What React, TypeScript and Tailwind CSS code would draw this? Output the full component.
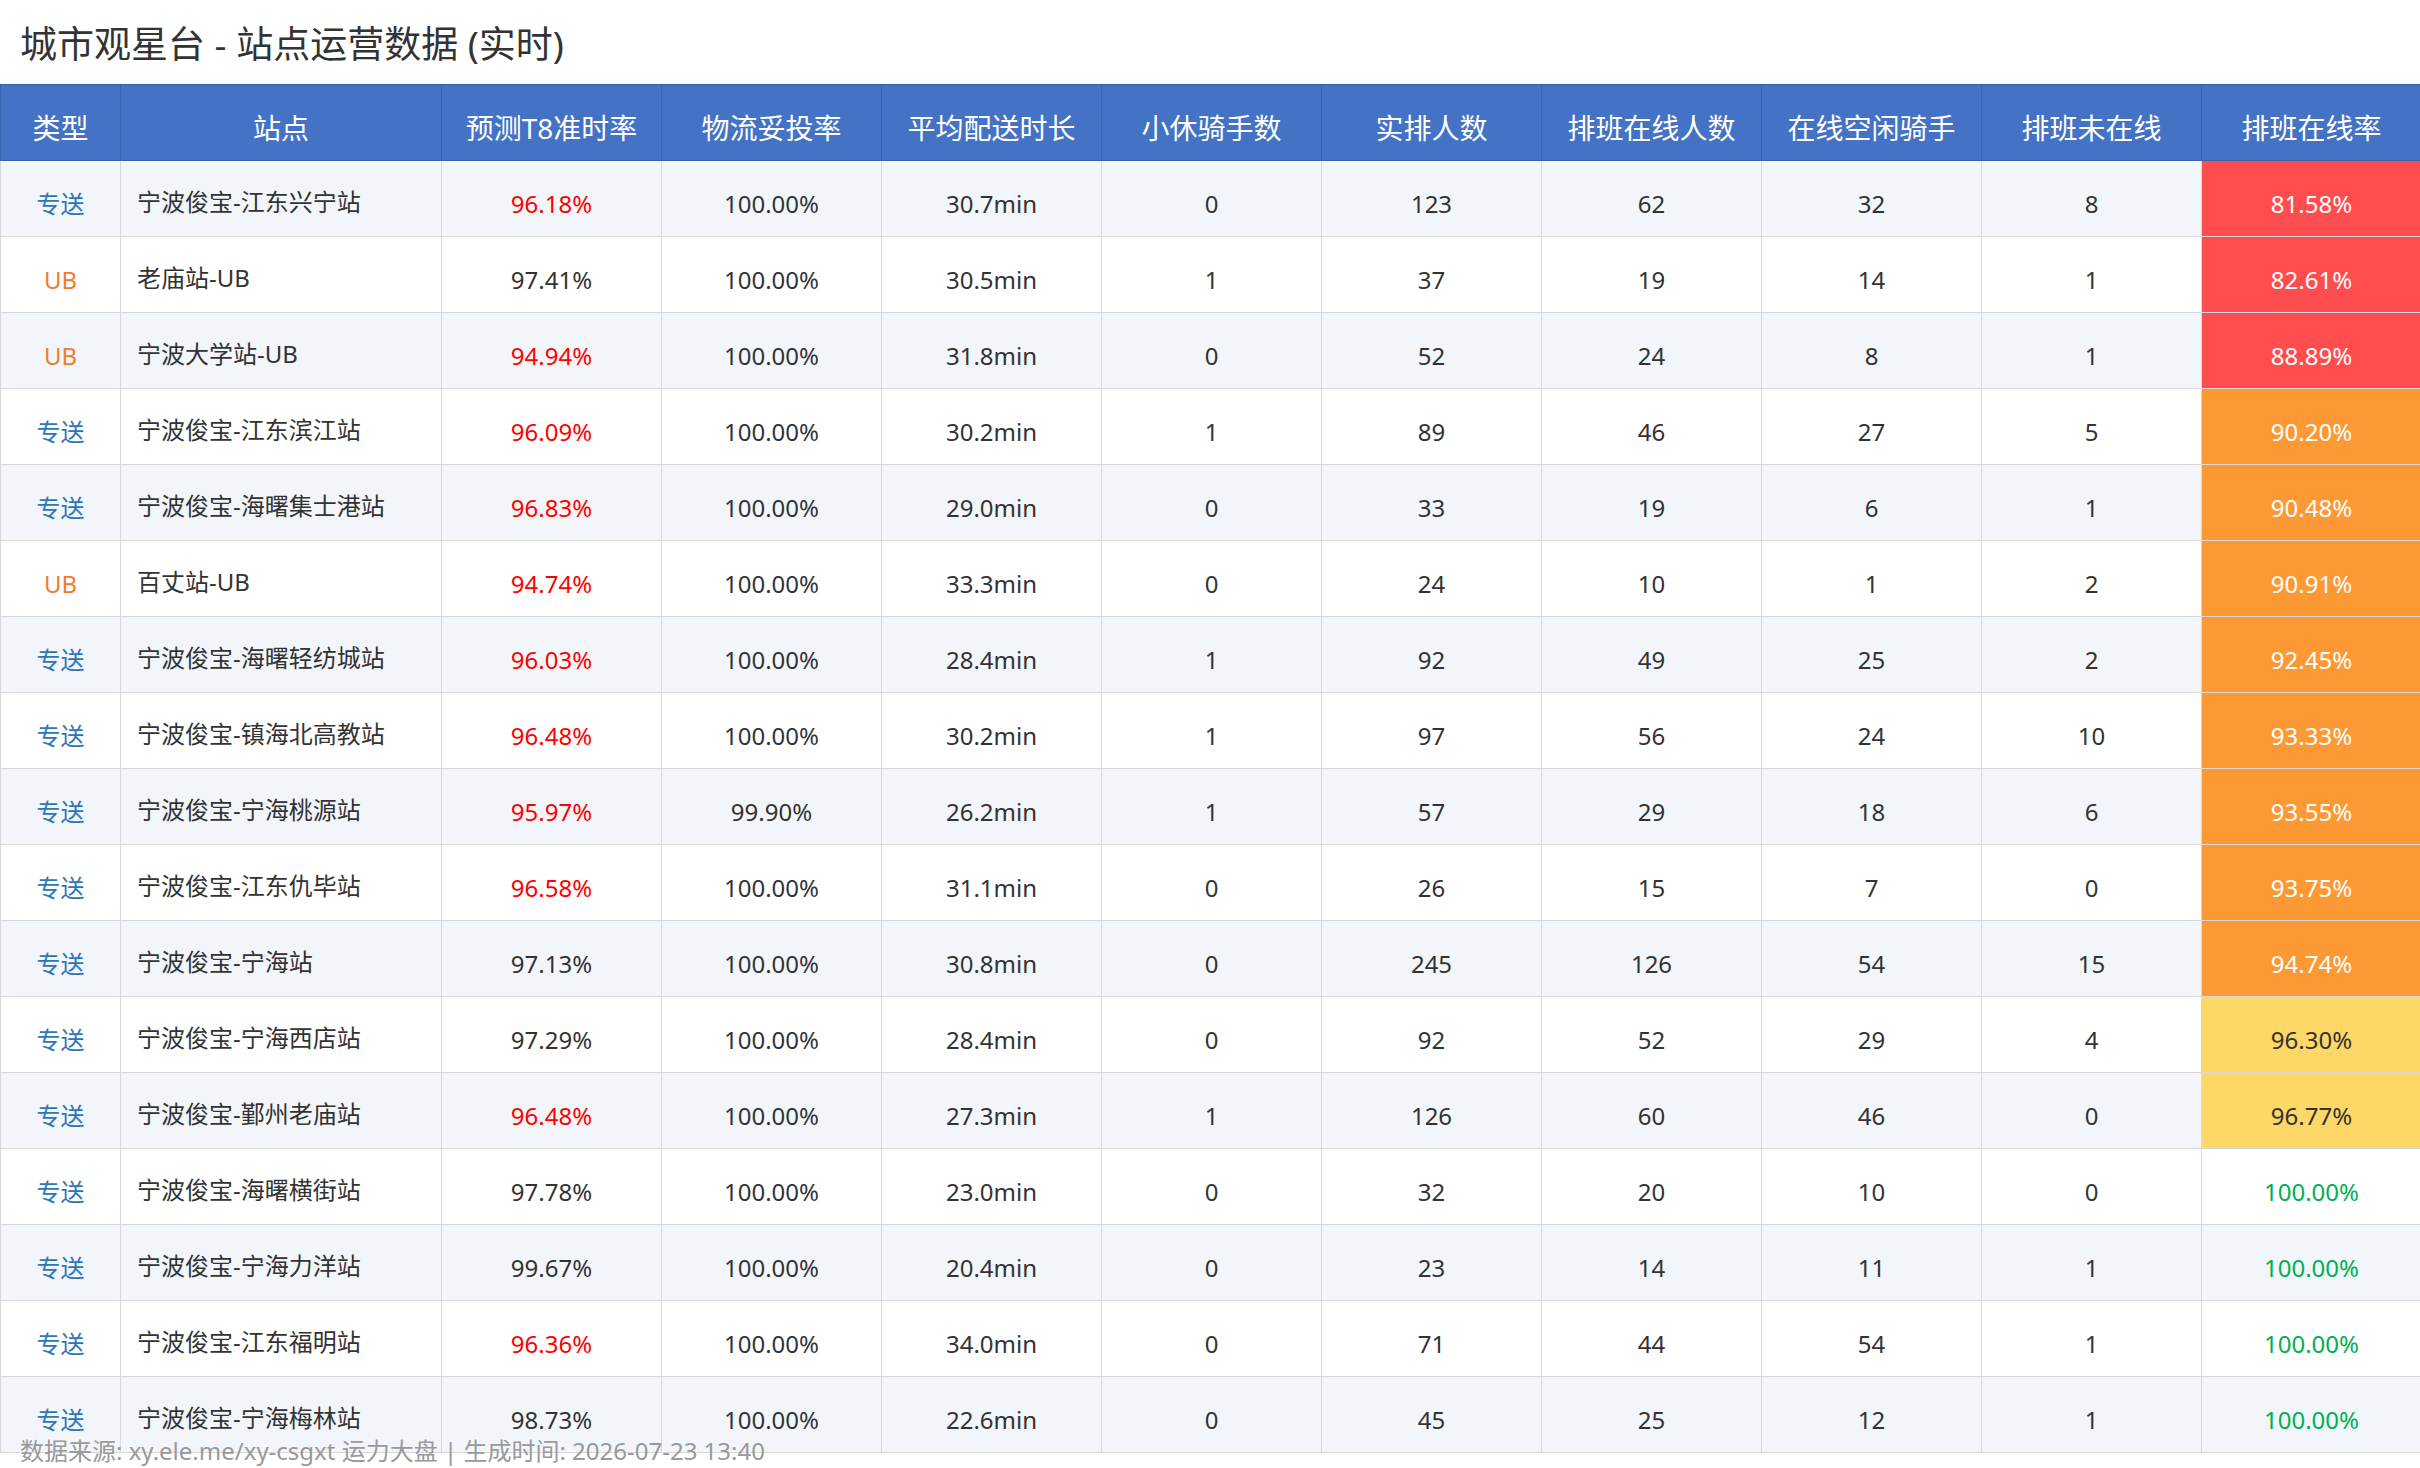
import React from "react";

type Row = {
  type: string;
  station: string;
  t8: string;
  delivered: string;
  avgTime: string;
  rest: string;
  scheduled: string;
  online: string;
  idle: string;
  offline: string;
  rate: string;
};

const rows: Row[] = [
  { type: "专送", station: "宁波俊宝-江东兴宁站", t8: "96.18%", delivered: "100.00%", avgTime: "30.7min", rest: "0", scheduled: "123", online: "62", idle: "32", offline: "8", rate: "81.58%" },
  { type: "UB", station: "老庙站-UB", t8: "97.41%", delivered: "100.00%", avgTime: "30.5min", rest: "1", scheduled: "37", online: "19", idle: "14", offline: "1", rate: "82.61%" },
  { type: "UB", station: "宁波大学站-UB", t8: "94.94%", delivered: "100.00%", avgTime: "31.8min", rest: "0", scheduled: "52", online: "24", idle: "8", offline: "1", rate: "88.89%" },
  { type: "专送", station: "宁波俊宝-江东滨江站", t8: "96.09%", delivered: "100.00%", avgTime: "30.2min", rest: "1", scheduled: "89", online: "46", idle: "27", offline: "5", rate: "90.20%" },
  { type: "专送", station: "宁波俊宝-海曙集士港站", t8: "96.83%", delivered: "100.00%", avgTime: "29.0min", rest: "0", scheduled: "33", online: "19", idle: "6", offline: "1", rate: "90.48%" },
  { type: "UB", station: "百丈站-UB", t8: "94.74%", delivered: "100.00%", avgTime: "33.3min", rest: "0", scheduled: "24", online: "10", idle: "1", offline: "2", rate: "90.91%" },
  { type: "专送", station: "宁波俊宝-海曙轻纺城站", t8: "96.03%", delivered: "100.00%", avgTime: "28.4min", rest: "1", scheduled: "92", online: "49", idle: "25", offline: "2", rate: "92.45%" },
  { type: "专送", station: "宁波俊宝-镇海北高教站", t8: "96.48%", delivered: "100.00%", avgTime: "30.2min", rest: "1", scheduled: "97", online: "56", idle: "24", offline: "10", rate: "93.33%" },
  { type: "专送", station: "宁波俊宝-宁海桃源站", t8: "95.97%", delivered: "99.90%", avgTime: "26.2min", rest: "1", scheduled: "57", online: "29", idle: "18", offline: "6", rate: "93.55%" },
  { type: "专送", station: "宁波俊宝-江东仇毕站", t8: "96.58%", delivered: "100.00%", avgTime: "31.1min", rest: "0", scheduled: "26", online: "15", idle: "7", offline: "0", rate: "93.75%" },
  { type: "专送", station: "宁波俊宝-宁海站", t8: "97.13%", delivered: "100.00%", avgTime: "30.8min", rest: "0", scheduled: "245", online: "126", idle: "54", offline: "15", rate: "94.74%" },
  { type: "专送", station: "宁波俊宝-宁海西店站", t8: "97.29%", delivered: "100.00%", avgTime: "28.4min", rest: "0", scheduled: "92", online: "52", idle: "29", offline: "4", rate: "96.30%" },
  { type: "专送", station: "宁波俊宝-鄞州老庙站", t8: "96.48%", delivered: "100.00%", avgTime: "27.3min", rest: "1", scheduled: "126", online: "60", idle: "46", offline: "0", rate: "96.77%" },
  { type: "专送", station: "宁波俊宝-海曙横街站", t8: "97.78%", delivered: "100.00%", avgTime: "23.0min", rest: "0", scheduled: "32", online: "20", idle: "10", offline: "0", rate: "100.00%" },
  { type: "专送", station: "宁波俊宝-宁海力洋站", t8: "99.67%", delivered: "100.00%", avgTime: "20.4min", rest: "0", scheduled: "23", online: "14", idle: "11", offline: "1", rate: "100.00%" },
  { type: "专送", station: "宁波俊宝-江东福明站", t8: "96.36%", delivered: "100.00%", avgTime: "34.0min", rest: "0", scheduled: "71", online: "44", idle: "54", offline: "1", rate: "100.00%" },
  { type: "专送", station: "宁波俊宝-宁海梅林站", t8: "98.73%", delivered: "100.00%", avgTime: "22.6min", rest: "0", scheduled: "45", online: "25", idle: "12", offline: "1", rate: "100.00%" },
];

const headers = ["类型", "站点", "预测T8准时率", "物流妥投率", "平均配送时长", "小休骑手数", "实排人数", "排班在线人数", "在线空闲骑手", "排班未在线", "排班在线率"];

// cell tint for the online rate column
function rateClass(rate: string) {
  const v = parseFloat(rate);
  if (v < 90) return "bg-[#ff4d4f] text-white";
  if (v < 95) return "bg-[#fd9934] text-white";
  if (v < 100) return "bg-[#fed866] text-[#333333]";
  return "text-[#00b050]";
}

export default function App() {
  return (
    <div className="relative h-[1468px] w-[2420px] overflow-hidden bg-white font-['Noto_Sans','Noto_Sans_CJK_SC',sans-serif] text-[#333333]">
      <div className="flex h-[84px] items-center pl-[20px] pt-[2px] text-[37px] leading-none text-[#333333]">
        城市观星台 - 站点运营数据 (实时)
      </div>

      <table className="w-[2420px] table-fixed border-collapse">
        <colgroup>
          <col className="w-[120px]" />
          <col className="w-[321px]" />
          {headers.slice(2).map((h) => (
            <col key={h} className="w-[220px]" />
          ))}
        </colgroup>
        <thead>
          <tr className="h-[76px] bg-[#4472c4] text-white">
            {headers.map((h) => (
              <th key={h} className="border border-[#3a63ad] pt-[10px] text-center text-[28px] font-normal leading-none">
                {h}
              </th>
            ))}
          </tr>
        </thead>
        <tbody className="text-[24px] leading-none">
          {rows.map((r, i) => (
            <tr key={r.station} className={i % 2 === 0 ? "h-[76px] bg-[#f2f6fa]" : "h-[76px] bg-white"}>
              <td className={`border border-[#d9d9d9] pt-[10px] text-center ${r.type === "UB" ? "text-[#ed7d31]" : "text-[#2e75b6]"}`}>
                {r.type}
              </td>
              <td className="border border-[#d9d9d9] pl-[16px] pt-[6px] text-left">{r.station}</td>
              <td className={`border border-[#d9d9d9] pt-[10px] text-center ${parseFloat(r.t8) < 97 ? "text-[#ff0000]" : ""}`}>{r.t8}</td>
              <td className="border border-[#d9d9d9] pt-[10px] text-center">{r.delivered}</td>
              <td className="border border-[#d9d9d9] pt-[10px] text-center">{r.avgTime}</td>
              <td className="border border-[#d9d9d9] pt-[10px] text-center">{r.rest}</td>
              <td className="border border-[#d9d9d9] pt-[10px] text-center">{r.scheduled}</td>
              <td className="border border-[#d9d9d9] pt-[10px] text-center">{r.online}</td>
              <td className="border border-[#d9d9d9] pt-[10px] text-center">{r.idle}</td>
              <td className="border border-[#d9d9d9] pt-[10px] text-center">{r.offline}</td>
              <td className={`border border-[#d9d9d9] pt-[10px] text-center ${rateClass(r.rate)}`}>{r.rate}</td>
            </tr>
          ))}
        </tbody>
      </table>

      <div className="absolute bottom-[5px] left-[20px] text-[24px] leading-none text-[#999999]">
        数据来源: xy.ele.me/xy-csgxt 运力大盘 | 生成时间: 2026-07-23 13:40
      </div>
    </div>
  );
}
